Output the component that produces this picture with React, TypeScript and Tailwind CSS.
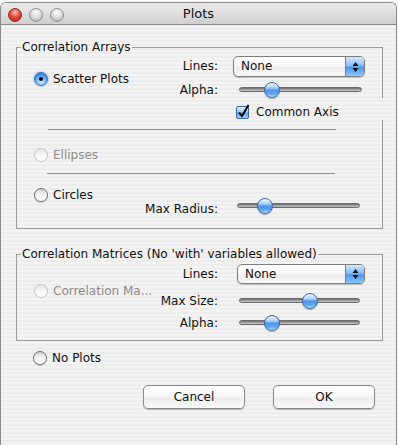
import type { ReactNode } from "react";

const stripes =
  "bg-[repeating-linear-gradient(180deg,#ededed_0px,#ededed_2px,#f3f3f3_2px,#f3f3f3_4px)] bg-fixed";

function Radio({ checked = false, disabled = false }: { checked?: boolean; disabled?: boolean }) {
  if (checked) {
    return (
      <span className="flex h-[14px] w-[14px] shrink-0 items-center justify-center rounded-full border border-[#3a6bb0] bg-[radial-gradient(circle_at_50%_75%,#d6f0ff_0%,#6fb2f3_45%,#3a84df_75%,#2a66c0_100%)] shadow-[0_0_3px_#7fb4f0]">
        <span className="h-[4px] w-[4px] rounded-full bg-black" />
      </span>
    );
  }
  return (
    <span
      className={
        disabled
          ? "h-[14px] w-[14px] shrink-0 rounded-full border border-[#c4c4c4] bg-[linear-gradient(180deg,#e4e4e4_0%,#f6f6f6_50%,#ffffff_100%)]"
          : "h-[14px] w-[14px] shrink-0 rounded-full border border-[#6f6f6f] bg-[linear-gradient(180deg,#cfcfcf_0%,#f2f2f2_45%,#ffffff_100%)] shadow-[0_1px_1px_rgba(0,0,0,0.2)]"
      }
    />
  );
}

function RadioRow({
  label,
  checked,
  disabled,
}: {
  label: string;
  checked?: boolean;
  disabled?: boolean;
}) {
  return (
    <div className="flex h-[14px] items-center gap-[5px] whitespace-nowrap">
      <Radio checked={checked} disabled={disabled} />
      <span className={disabled ? "text-[#8c8c8c]" : "text-[#111]"}>{label}</span>
    </div>
  );
}

function Slider({ width, value }: { width: number; value: number }) {
  return (
    <div className="relative h-[16px]" style={{ width }}>
      <div className="absolute left-0 right-0 top-[5px] h-[5px] rounded-full border border-[#6a6a6a] bg-[linear-gradient(180deg,#6d6d6d_0%,#9c9c9c_50%,#cdcdcd_100%)]" />
      <div
        className="absolute top-0 h-[16px] w-[16px] -translate-x-1/2 rounded-full border border-[#3d6aa6] bg-[linear-gradient(180deg,#eef6ff_0%,#a9d0f6_35%,#4d95e8_52%,#5fa6f2_78%,#b6defe_100%)] shadow-[0_1px_1px_rgba(0,0,0,0.3)]"
        style={{ left: Math.round(value * width) }}
      />
    </div>
  );
}

function Popup({ width, height }: { width: number; height: number }) {
  return (
    <div
      className="flex overflow-hidden rounded-[5px] border border-[#7d7d7d] bg-[linear-gradient(180deg,#ffffff_0%,#f6f6f6_50%,#ebebeb_55%,#f8f8f8_100%)] shadow-[0_1px_1px_rgba(0,0,0,0.2)]"
      style={{ width, height }}
    >
      <span className="flex flex-1 items-center pl-[7px] text-[#111]">None</span>
      <span className="flex w-[19px] flex-col items-center justify-center gap-[2px] border-l border-[#5d86c0] bg-[linear-gradient(180deg,#d3e9fd_0%,#88bdf3_45%,#4f97ea_55%,#8cc6ff_100%)]">
        <svg width="7" height="4" viewBox="0 0 7 4">
          <path d="M0.5 4 L3.5 0 L6.5 4 Z" fill="#111" />
        </svg>
        <svg width="7" height="4" viewBox="0 0 7 4">
          <path d="M0.5 0 L3.5 4 L6.5 0 Z" fill="#111" />
        </svg>
      </span>
    </div>
  );
}

function Row({
  label,
  children,
  className = "",
  labelClass = "",
}: {
  label: string;
  children: ReactNode;
  className?: string;
  labelClass?: string;
}) {
  return (
    <div className={"flex items-center gap-[15px] " + className}>
      <span className={"flex w-[51px] justify-end whitespace-nowrap text-[#111] " + labelClass}>{label}</span>
      <div className="w-[132px]">{children}</div>
    </div>
  );
}

function Group({ title, children, className = "" }: { title: string; children: ReactNode; className?: string }) {
  return (
    <fieldset className={"ml-[15px] w-[367px] border border-[#9c9c9c] " + className}>
      <legend className="ml-[4px] px-[1px] leading-[15px] text-[#111]">{title}</legend>
      {children}
    </fieldset>
  );
}

function Button({ label }: { label: string }) {
  return (
    <button
      type="button"
      className="h-[24px] w-[102px] rounded-[5px] border border-[#8a8a8a] bg-[linear-gradient(180deg,#ffffff_0%,#f7f7f7_50%,#ececec_55%,#fafafa_100%)] text-[12px] text-[#111] shadow-[0_1px_1px_rgba(0,0,0,0.25)]"
    >
      {label}
    </button>
  );
}

export default function App() {
  return (
    <div className="h-[445px] w-[398px] overflow-hidden bg-[#f7f7f7] font-['DejaVu_Sans','Liberation_Sans',sans-serif] text-[12px] leading-[15px]">
      <div className="mt-[2px] flex h-[443px] w-[397px] flex-col overflow-hidden rounded-t-[6px] border-x border-t border-[#8a8a8a]">
        {/* title bar */}
        <div className="grid h-[22px] shrink-0 grid-cols-[1fr_auto_1fr] border-b border-[#8c8c8c] bg-[linear-gradient(180deg,#eaeaea_0%,#dedede_50%,#cfcfcf_100%)]">
          <div className="flex gap-[7px] pl-[7px] pt-[5px]">
            <span className="h-[14px] w-[14px] rounded-full border border-[#8e2b22] bg-[radial-gradient(circle_at_50%_30%,#ffc2b8_0%,#e4493d_45%,#a61d14_100%)]" />
            <span className="h-[14px] w-[14px] rounded-full border border-[#8f8f8f] bg-[radial-gradient(circle_at_50%_30%,#ffffff_0%,#d9d9d9_50%,#a9a9a9_100%)]" />
            <span className="h-[14px] w-[14px] rounded-full border border-[#8f8f8f] bg-[radial-gradient(circle_at_50%_30%,#ffffff_0%,#d9d9d9_50%,#a9a9a9_100%)]" />
          </div>
          <div className="pt-[3px] text-[13px] leading-[16px] text-[#111]">Plots</div>
          <div />
        </div>

        <div className={"flex-1 " + stripes}>
          <Group title="Correlation Arrays" className="mt-[15px] pb-[14px]">
            <div className="mt-[1px] flex">
              <div className="w-[150px] pl-[17px] pt-[16px]">
                <RadioRow label="Scatter Plots" checked />
              </div>
              <div className="flex flex-col">
                <Row label="Lines:">
                  <Popup width={132} height={21} />
                </Row>
                <Row label="Alpha:" className="mt-[5px]">
                  <div className="pl-[6px]">
                    <Slider width={123} value={0.27} />
                  </div>
                </Row>
                <div
                  className={
                    "-mb-[1px] -mr-[22px] ml-[66px] flex h-[22px] items-center gap-[7px] pl-[3px] pt-[6px] " +
                    stripes
                  }
                >
                  <span className="relative h-[13px] w-[13px] rounded-[2px] border border-[#3b68a6] bg-[linear-gradient(180deg,#e2f1ff_0%,#9ccaf6_45%,#5a9fec_55%,#9fd2ff_100%)]">
                    <svg className="absolute -top-[3px] left-[0px]" width="14" height="15" viewBox="0 0 14 15">
                      <path d="M2 8.5 L5 12 L11.5 1" fill="none" stroke="#000" strokeWidth="2" />
                    </svg>
                  </span>
                  <span className="text-[#111]">Common Axis</span>
                </div>
              </div>
            </div>
            <div className="ml-[31px] mt-[10px] h-px w-[288px] bg-[#8f8f8f]" />
            <div className="ml-[17px] mt-[18px]">
              <RadioRow label="Ellipses" disabled />
            </div>
            <div className="ml-[30px] mt-[11px] h-px w-[288px] bg-[#8f8f8f]" />
            <div className="ml-[17px] mt-[14px]">
              <RadioRow label="Circles" />
            </div>
            <div className="-mt-[4px] pl-[150px]">
              <Row label="Max Radius:" labelClass="translate-y-[3px]">
                <div className="pl-[4px]">
                  <Slider width={123} value={0.23} />
                </div>
              </Row>
            </div>
          </Group>

          <Group title="Correlation Matrices (No 'with' variables allowed)" className="mt-[18px] pb-[9px]">
            <div className="flex">
              <div className="w-[150px] pl-[17px] pt-[22px]">
                <RadioRow label="Correlation Ma..." disabled />
              </div>
              <div className="flex flex-col">
                <Row label="Lines:" className="mt-[2px]">
                  <div className="pl-[4px]">
                    <Popup width={128} height={20} />
                  </div>
                </Row>
                <Row label="Max Size:" className="mt-[9px]">
                  <div className="pl-[6px]">
                    <Slider width={121} value={0.59} />
                  </div>
                </Row>
                <Row label="Alpha:" className="mt-[6px]">
                  <div className="pl-[6px]">
                    <Slider width={121} value={0.27} />
                  </div>
                </Row>
              </div>
            </div>
          </Group>

          <div className="ml-[32px] mt-[10px]">
            <RadioRow label="No Plots" />
          </div>

          <div className="mt-[20px] flex justify-end gap-[28px] pr-[21px]">
            <Button label="Cancel" />
            <Button label="OK" />
          </div>
        </div>
      </div>
    </div>
  );
}
